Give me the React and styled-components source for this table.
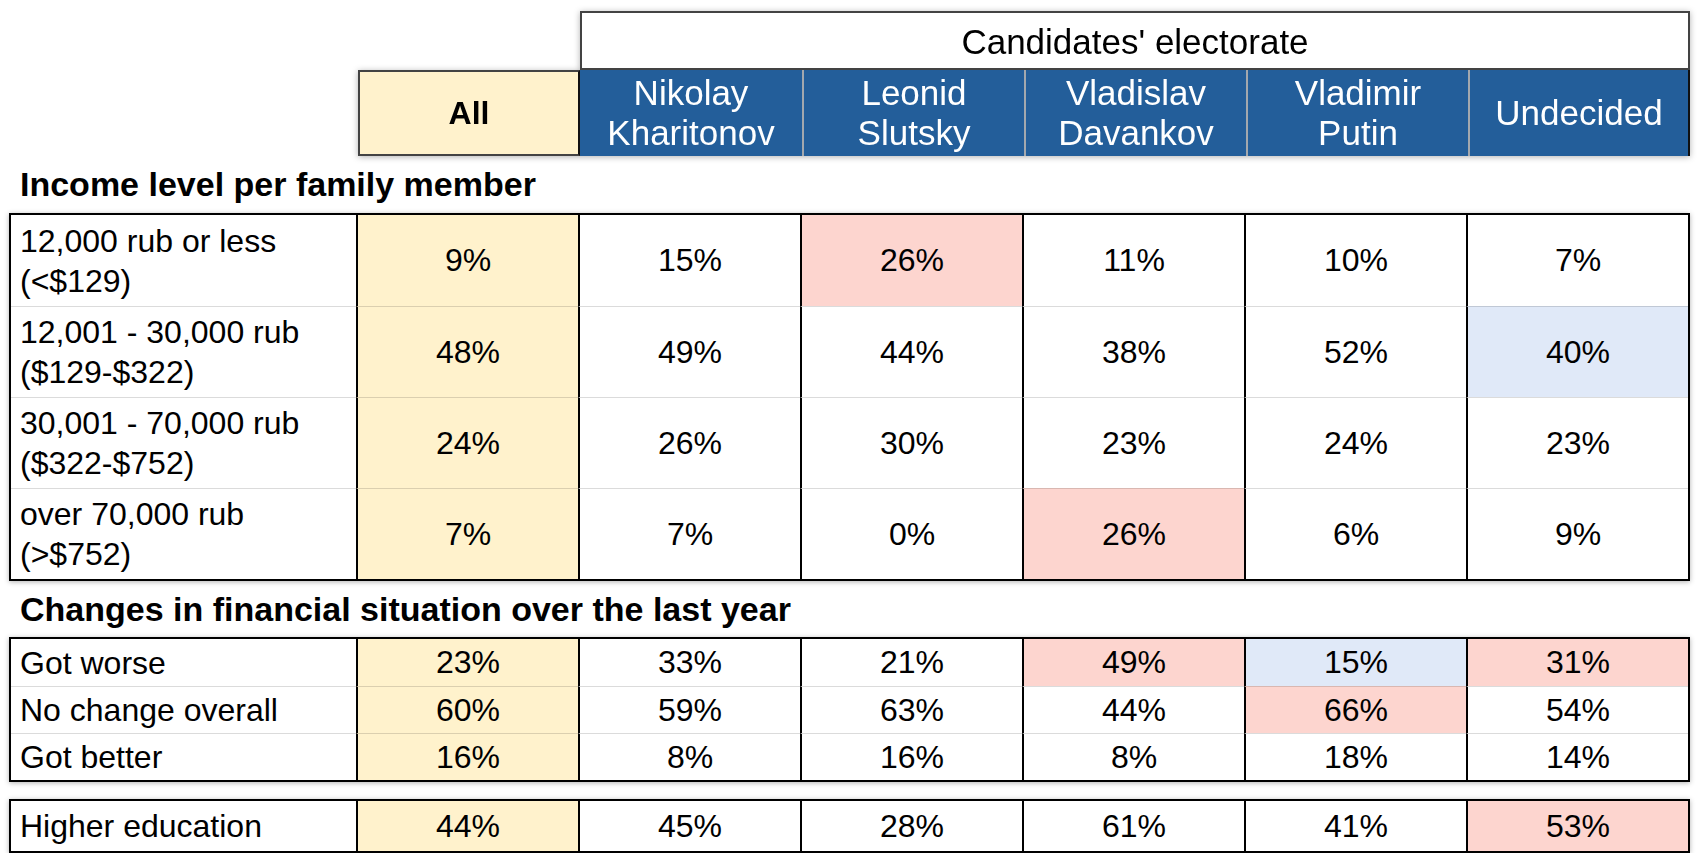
import React from "react";
import styled, { createGlobalStyle } from "styled-components";

const GlobalStyle = createGlobalStyle`
    body {
        margin: 0;
        background: #ffffff;
        font-family: "Liberation Sans", Arial, Helvetica, sans-serif;
        color: #000000;
    }
`;

const candidates = [
    ["Nikolay", "Kharitonov"],
    ["Leonid", "Slutsky"],
    ["Vladislav", "Davankov"],
    ["Vladimir", "Putin"],
    ["Undecided"],
];

// each value: "text" or [text, tone]
const incomeRows = [
    { label: ["12,000 rub or less", "(<$129)"], values: ["9%", "15%", ["26%", "pink"], "11%", "10%", "7%"] },
    { label: ["12,001 - 30,000 rub", "($129-$322)"], values: ["48%", "49%", "44%", "38%", "52%", ["40%", "blue"]] },
    { label: ["30,001 - 70,000 rub", "($322-$752)"], values: ["24%", "26%", "30%", "23%", "24%", "23%"] },
    { label: ["over 70,000 rub", "(>$752)"], values: ["7%", "7%", "0%", ["26%", "pink"], "6%", "9%"] },
];

const changeRows = [
    { label: ["Got worse"], values: ["23%", "33%", "21%", ["49%", "pink"], ["15%", "blue"], ["31%", "pink"]] },
    { label: ["No change overall"], values: ["60%", "59%", "63%", "44%", ["66%", "pink"], "54%"] },
    { label: ["Got better"], values: ["16%", "8%", "16%", "8%", "18%", "14%"] },
];

const educationRows = [
    { label: ["Higher education"], values: ["44%", "45%", "28%", "61%", "41%", ["53%", "pink"]] },
];

const tones = {
    all: "#fff2cc",
    pink: "#fdd5cf",
    blue: "#e0e9f8",
};

function Lines({ lines }) {
    return (
        <span>
            {lines.map((line, j) => (
                <React.Fragment key={j}>
                    {j > 0 && <br />}
                    {line}
                </React.Fragment>
            ))}
        </span>
    );
}

function Table({ rows, rowHeight }) {
    return (
        <TableBox>
            {rows.map((row, i) => (
                <Row key={i} $height={rowHeight}>
                    <LabelCell $divided={i > 0}>
                        <Lines lines={row.label} />
                    </LabelCell>
                    {row.values.map((v, j) => {
                        const [text, tone] = Array.isArray(v) ? v : [v, j === 0 ? "all" : null];
                        return (
                            <ValueCell key={j} $tone={tone} $divided={i > 0}>
                                {text}
                            </ValueCell>
                        );
                    })}
                </Row>
            ))}
        </TableBox>
    );
}

export default function App() {
    return (
        <>
            <GlobalStyle />
            <Page>
                <HeaderGrid>
                    <GroupHeader>Candidates' electorate</GroupHeader>
                    <AllHead>All</AllHead>
                    {candidates.map((name, i) => (
                        <NameHead key={i} $col={i + 3} $first={i === 0} $last={i === candidates.length - 1}>
                            <Lines lines={name} />
                        </NameHead>
                    ))}
                </HeaderGrid>

                <SectionTitle $height={57}>Income level per family member</SectionTitle>
                <Table rows={incomeRows} rowHeight={91} />

                <SectionTitle $height={56}>Changes in financial situation over the last year</SectionTitle>
                <Table rows={changeRows} rowHeight={47} />

                <Spacer />
                <Table rows={educationRows} rowHeight={50} />
            </Page>
        </>
    );
}

const Page = styled.div`
    width: 1681px;
    padding: 11px 0 0 9px;
`;

const HeaderGrid = styled.div`
    display: grid;
    grid-template-columns: 349px repeat(6, 222px);
    grid-template-rows: 59px 86px;
    filter: drop-shadow(0 1px 3px rgba(0, 0, 0, 0.3));
`;

const GroupHeader = styled.div`
    grid-column: 3 / span 5;
    grid-row: 1;
    box-sizing: border-box;
    border: 2px solid #434343;
    background: #ffffff;
    display: flex;
    align-items: center;
    justify-content: center;
    font-size: 35px;
    padding-top: 2px;
`;

const AllHead = styled.div`
    grid-column: 2;
    grid-row: 2;
    box-sizing: border-box;
    border: 2px solid #434343;
    border-right-color: #111111;
    background: #fff2cc;
    display: flex;
    align-items: center;
    justify-content: center;
    font-size: 32px;
    font-weight: 700;
`;

const NameHead = styled.div`
    grid-column: ${(p) => p.$col};
    grid-row: 2;
    box-sizing: border-box;
    background: #235e9a;
    color: #ffffff;
    border-left: ${(p) => (p.$first ? "none" : "2px solid #a3a8ae")};
    border-right: ${(p) => (p.$last ? "2px solid #111111" : "none")};
    display: flex;
    align-items: center;
    justify-content: center;
    text-align: center;
    font-size: 35px;
    line-height: 40px;
`;

const SectionTitle = styled.div`
    height: ${(p) => p.$height}px;
    display: flex;
    align-items: center;
    padding-left: 11px;
    font-size: 34px;
    font-weight: 700;
`;

const TableBox = styled.div`
    width: 1681px;
    box-sizing: border-box;
    border: 2px solid #000000;
    background: #ffffff;
    box-shadow: 0 1px 5px rgba(0, 0, 0, 0.3);
`;

const Row = styled.div`
    display: grid;
    grid-template-columns: 345px repeat(6, 222px);
    height: ${(p) => p.$height}px;
`;

const LabelCell = styled.div`
    box-sizing: border-box;
    display: flex;
    align-items: center;
    padding-left: 9px;
    font-size: 32px;
    line-height: 40px;
    white-space: nowrap;
    border-top: ${(p) => (p.$divided ? "1px solid rgba(0, 0, 0, 0.14)" : "none")};
`;

const ValueCell = styled.div`
    box-sizing: border-box;
    display: flex;
    align-items: center;
    justify-content: center;
    font-size: 32px;
    background: ${(p) => (p.$tone ? tones[p.$tone] : "#ffffff")};
    border-left: 2px solid #000000;
    border-top: ${(p) => (p.$divided ? "1px solid rgba(0, 0, 0, 0.14)" : "none")};
`;

const Spacer = styled.div`
    height: 17px;
`;
